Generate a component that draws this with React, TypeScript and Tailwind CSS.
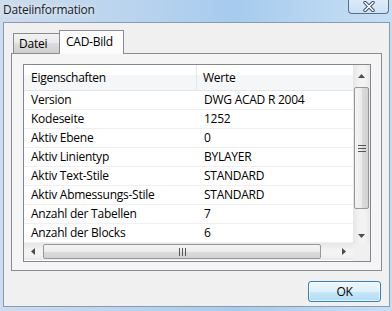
import React from "react";

const rows: [string, string][] = [
  ["Version", "DWG ACAD R 2004"],
  ["Kodeseite", "1252"],
  ["Aktiv Ebene", "0"],
  ["Aktiv Linientyp", "BYLAYER"],
  ["Aktiv Text-Stile", "STANDARD"],
  ["Aktiv Abmessungs-Stile", "STANDARD"],
  ["Anzahl der Tabellen", "7"],
  ["Anzahl der Blocks", "6"],
];

const font = { fontFamily: '"Open Sans", "Noto Sans", sans-serif' };

function Arrow({ dir }: { dir: "up" | "down" | "left" | "right" }) {
  const pts: Record<string, string> = {
    up: "0,4 3.5,0 7,4",
    down: "0,0 3.5,4 7,0",
    left: "4,0 0,3.5 4,7",
    right: "0,0 4,3.5 0,7",
  };
  const vertical = dir === "up" || dir === "down";
  return (
    <svg width={vertical ? 7 : 4} height={vertical ? 4 : 7} viewBox={vertical ? "0 0 7 4" : "0 0 4 7"}>
      <polygon points={pts[dir]} fill="#4d4d4d" />
    </svg>
  );
}

export default function App() {
  return (
    <div
      className="w-[392px] h-[311px] overflow-hidden flex flex-col text-[12px] tracking-[-0.25px] text-black"
      style={{ ...font }}
    >
      <div className="w-[392px] h-[311px] flex flex-col bg-[linear-gradient(90deg,#ccdcee_0%,#b9d3ee_35%,#a6cbee_60%,#bcd8f2_85%,#c6def4_100%)]">
        {/* Title bar */}
        <div className="h-[22px] flex items-start justify-between">
          <div className="pl-[3px] pt-[1px] text-[12px] text-[#1c1c1c] leading-[17px] [text-shadow:0_0_6px_rgba(255,255,255,0.9)]">
            Dateiinformation
          </div>
          <div className="mr-[3px] w-[41px] h-[14px] rounded-b-[4px] border border-t-0 border-[#5b6f89] bg-[linear-gradient(180deg,rgba(255,255,255,0.45),rgba(255,255,255,0.15))] flex items-center justify-center">
            <svg width="14" height="11" viewBox="0 0 14 11">
              <path d="M3 1.5 L11 9.5 M11 1.5 L3 9.5" stroke="#3c4a5e" strokeWidth="3.4" strokeLinecap="round" />
              <path d="M3 1.5 L11 9.5 M11 1.5 L3 9.5" stroke="#ffffff" strokeWidth="1.6" strokeLinecap="round" />
            </svg>
          </div>
        </div>

        {/* Client area */}
        <div className="ml-[3px] mr-[2px] h-[285px] border border-[#8a9bb0] bg-[#f0f0f0] flex flex-col px-[7px] pt-[7px]">
          {/* Tabs */}
          <div className="flex items-end h-[23px] pl-[2px]">
            <div className="h-[20px] w-[47px] border border-b-0 border-[#898c95] bg-[linear-gradient(180deg,#f2f2f2_0%,#ebebeb_45%,#dddddd_50%,#cfcfcf_100%)] flex items-center pl-[5px] pt-[1px]">
              Datei
            </div>
            <div className="relative z-10 -mb-px h-[24px] w-[65px] border border-b-0 border-[#898c95] -ml-px bg-[#fcfcfc] flex items-center pl-[6px] pb-[1px]">
              CAD-Bild
            </div>
          </div>

          {/* Tab panel */}
          <div className="h-[218px] border border-[#898c95] bg-[#f5f5f5] pl-[11px] pr-[10px] pt-[10px]">
            {/* List view */}
            <div className="h-[198px] border border-[#828790] bg-white flex">
              <div className="flex-1 flex flex-col min-w-0">
                {/* Header */}
                <div className="h-[26px] flex bg-[linear-gradient(180deg,#ffffff_0%,#ffffff_40%,#f5f6f7_41%,#f5f6f7_100%)] border-b border-[#e5e5e5]">
                  <div className="w-[173px] pl-[7px] flex items-center pt-[1px] border-r border-[#e3e8ee]">Eigenschaften</div>
                  <div className="flex-1 pl-[6px] flex items-center pt-[1px]">Werte</div>
                </div>
                {rows.map(([k, v]) => (
                  <div key={k} className="h-[19px] flex border-b border-[#f0f0f0] items-center">
                    <div className="w-[173px] pl-[7px] whitespace-nowrap">{k}</div>
                    <div className="flex-1 pl-[7px] whitespace-nowrap">{v}</div>
                  </div>
                ))}
                {/* Horizontal scrollbar */}
                <div className="h-[17px] flex bg-[linear-gradient(180deg,#e6e6e6_0%,#f3f3f3_40%,#f3f3f3_70%,#e9e9e9_100%)]">
                  <div className="w-[18px] flex items-center justify-center"><Arrow dir="left" /></div>
                  <div className="flex-1 flex items-center">
                    <div className="ml-[1px] w-[278px] h-[15px] rounded-[2px] border border-[#979797] bg-[linear-gradient(180deg,#f4f4f4_0%,#ececec_50%,#dcdcdc_51%,#d2d2d2_100%)] flex items-center justify-center">
                      <svg width="7" height="8" viewBox="0 0 7 8">
                        <path d="M0.5 0 V8 M3.5 0 V8 M6.5 0 V8" stroke="#555" strokeWidth="1" />
                      </svg>
                    </div>
                  </div>
                  <div className="w-[18px] flex items-center justify-center"><Arrow dir="right" /></div>
                </div>
              </div>
              {/* Vertical scrollbar column */}
              <div className="w-[17px] flex flex-col">
                <div className="flex-1 flex flex-col bg-[linear-gradient(90deg,#e6e6e6_0%,#f3f3f3_40%,#f3f3f3_70%,#e9e9e9_100%)]">
                  <div className="h-[22px] flex items-center justify-center"><Arrow dir="up" /></div>
                  <div className="mx-[1px] h-[122px] rounded-[2px] border border-[#979797] bg-[linear-gradient(90deg,#f4f4f4_0%,#ececec_50%,#dcdcdc_51%,#d2d2d2_100%)] flex items-center justify-center">
                    <svg width="8" height="7" viewBox="0 0 8 7">
                      <path d="M0 0.5 H8 M0 3.5 H8 M0 6.5 H8" stroke="#555" strokeWidth="1" />
                    </svg>
                  </div>
                  <div className="flex-1 flex items-end justify-center pb-[6px]"><Arrow dir="down" /></div>
                </div>
                <div className="h-[17px] bg-[#f0f0f0]" />
              </div>
            </div>
          </div>

          {/* Buttons */}
          <div className="flex justify-end pt-[10px] pr-[1px]">
            <div className="w-[73px] h-[21px] rounded-[3px] border border-[#3c7fb1] bg-[linear-gradient(180deg,#ecf7fd_0%,#def1fb_50%,#c6e7f9_51%,#b0dcf5_100%)] shadow-[inset_0_0_0_1px_rgba(255,255,255,0.6)] flex items-center justify-center">
              OK
            </div>
          </div>
        </div>
      </div>
    </div>
  );
}
